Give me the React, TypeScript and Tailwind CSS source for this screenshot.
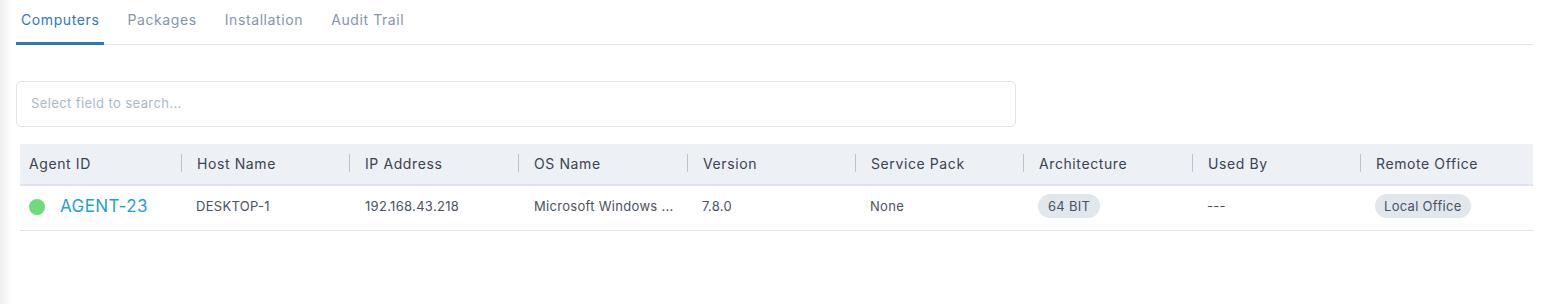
import * as React from 'react';

const tabs = ['Computers', 'Packages', 'Installation', 'Audit Trail'];

const columns = [
  'Agent ID',
  'Host Name',
  'IP Address',
  'OS Name',
  'Version',
  'Service Pack',
  'Architecture',
  'Used By',
  'Remote Office',
];

const widths = ['w-[161px]', 'w-[168px]', 'w-[169px]', 'w-[169px]', 'w-[168px]', 'w-[168px]', 'w-[169px]', 'w-[168px]', 'flex-1'];

export default function App() {
  const [active, setActive] = React.useState(0);

  return (
    <div className="relative h-[304px] w-[1547px] bg-white font-['Inter',sans-serif] overflow-hidden">
      <div className="absolute left-0 top-0 h-full w-[12px] bg-gradient-to-r from-[#eeeeee] to-white" />
      <div className="relative pl-4 pr-[14px]">
        <div className="flex gap-[18px] border-b border-[#e1e6ee] pt-[9px]">
          {tabs.map((t, i) => (
            <button
              key={t}
              onClick={() => setActive(i)}
              className={`-mb-px px-[5px] pb-[11px] text-[14px] leading-[22px] tracking-[0.6px] ${
                i === active ? 'border-b-[3px] border-[#2f78c0] text-[#2f78c0]' : 'border-b-[3px] border-transparent text-[#8396ac]'
              }`}
            >
              {t}
            </button>
          ))}
        </div>

        <div className="mt-[36px] flex h-[46px] w-[1000px] items-center rounded-[5px] border border-[#dfe5ee] px-[14px]">
          <input
            className="w-full bg-transparent text-[13px] tracking-[0.4px] text-[#4a5262] outline-none placeholder:text-[#a9b8ca]"
            placeholder="Select field to search..."
          />
        </div>

        <div className="ml-1 mt-[17px]">
          <div className="flex h-[40px] items-center bg-[#edf1f6] pb-[2px]">
            {columns.map((c, i) => (
              <div key={c} className={`${widths[i]} flex h-full items-center`}>
                {i > 0 && <div className="h-[18px] w-px bg-[#b9c4d2]" />}
                <span className={`${i === 0 ? 'pl-[9px]' : 'pl-[15px]'} text-[14px] tracking-[0.6px] text-[#3b4252]`}>{c}</span>
              </div>
            ))}
          </div>
          <div className="h-[2px] bg-[#dfe5ee]" />
          <div className="flex h-[45px] items-center border-b border-[#dfe5ee] pb-[2px] text-[13px] tracking-[0.3px] text-[#4a5262]">
            <div className="flex w-[161px] items-center pl-[9px]">
              <span className="h-4 w-4 rounded-full bg-[#6ddb7a]" />
              <span className="ml-[15px] text-[17px] tracking-[0.4px] text-[#1ea0d8]">AGENT-23</span>
            </div>
            <div className="w-[168px] pl-[15px]">DESKTOP-1</div>
            <div className="w-[169px] pl-[16px]">192.168.43.218</div>
            <div className="w-[169px] whitespace-nowrap pl-[16px]">Microsoft Windows ...</div>
            <div className="w-[168px] pl-[15px]">7.8.0</div>
            <div className="w-[168px] pl-[15px]">None</div>
            <div className="w-[169px] pl-[15px]">
              <span className="rounded-full bg-[#e2e7ee] px-[10px] py-[4px]">64 BIT</span>
            </div>
            <div className="w-[168px] pl-[15px]">---</div>
            <div className="flex-1 pl-[15px]">
              <span className="rounded-full bg-[#e2e7ee] px-[9px] py-[4px]">Local Office</span>
            </div>
          </div>
        </div>
      </div>
    </div>
  );
}
